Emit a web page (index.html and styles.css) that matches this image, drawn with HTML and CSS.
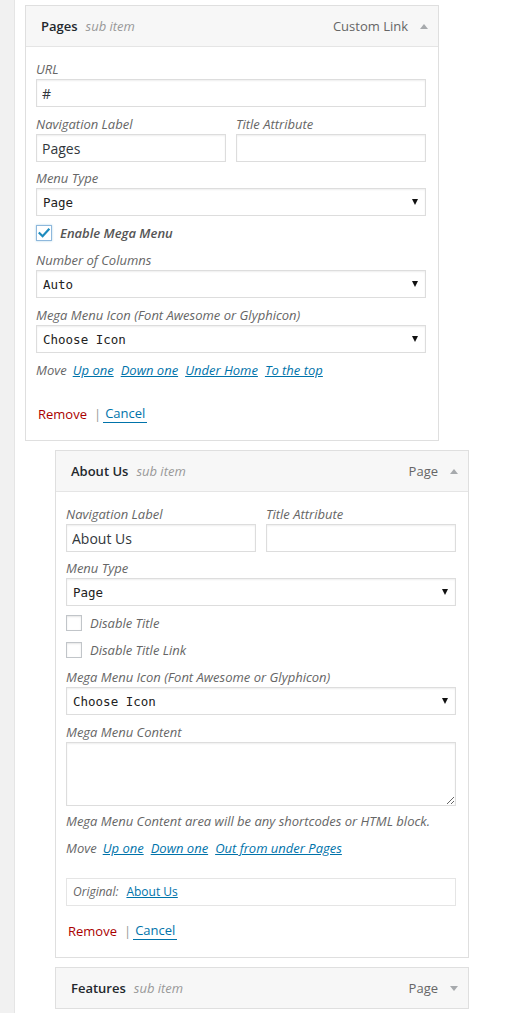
FILE: index.html
```html
<!DOCTYPE html>
<html lang="en">
<head>
<meta charset="utf-8">
<title>Menu items</title>
<link rel="stylesheet" href="styles.css">
</head>
<body>
<div class="screen">
  <div class="rail"></div>
  <ul class="menu-list">
    <!-- Pages -->
    <li class="menu-item">
      <div class="item-bar open">
        <span class="item-title">Pages</span>
        <span class="is-submenu">sub item</span>
        <span class="item-controls">
          <span class="item-type">Custom Link</span>
          <span class="item-arrow up"></span>
        </span>
      </div>
      <div class="item-settings">
        <div class="field field-wide">
          <label class="field-label">URL</label>
          <input class="text-input" type="text" value="#">
        </div>
        <div class="field-row">
          <div class="field half">
            <label class="field-label">Navigation Label</label>
            <input class="text-input" type="text" value="Pages">
          </div>
          <div class="field half">
            <label class="field-label">Title Attribute</label>
            <input class="text-input" type="text" value="">
          </div>
        </div>
        <div class="field">
          <label class="field-label">Menu Type</label>
          <span class="select-wrap"><select class="select"><option>Page</option></select></span>
        </div>
        <div class="check-row">
          <span class="checkbox checked">
            <svg width="14" height="14" viewBox="0 0 14 14"><path d="M2.6 7.2 L5.6 10.2 L11.6 3.6" fill="none" stroke="#1e8cbe" stroke-width="2.2" stroke-linecap="square"/></svg>
          </span>
          <span class="check-label strong">Enable Mega Menu</span>
        </div>
        <div class="field">
          <label class="field-label">Number of Columns</label>
          <span class="select-wrap"><select class="select"><option>Auto</option></select></span>
        </div>
        <div class="field">
          <label class="field-label">Mega Menu Icon (Font Awesome or Glyphicon)</label>
          <span class="select-wrap"><select class="select"><option>Choose Icon</option></select></span>
        </div>
        <div class="move-row">
          <span>Move</span>
          <a class="move-link first" href="#">Up one</a>
          <a class="move-link" href="#">Down one</a>
          <a class="move-link" href="#">Under Home</a>
          <a class="move-link" href="#">To the top</a>
        </div>
        <div class="actions actions-gap">
          <a class="remove" href="#">Remove</a>
          <span class="sep">|</span>
          <a class="cancel" href="#">Cancel</a>
        </div>
      </div>
    </li>

    <!-- About Us -->
    <li class="menu-item depth-1">
      <div class="item-bar open">
        <span class="item-title">About Us</span>
        <span class="is-submenu">sub item</span>
        <span class="item-controls">
          <span class="item-type">Page</span>
          <span class="item-arrow up"></span>
        </span>
      </div>
      <div class="item-settings">
        <div class="field-row">
          <div class="field half">
            <label class="field-label">Navigation Label</label>
            <input class="text-input" type="text" value="About Us">
          </div>
          <div class="field half">
            <label class="field-label">Title Attribute</label>
            <input class="text-input" type="text" value="">
          </div>
        </div>
        <div class="field">
          <label class="field-label">Menu Type</label>
          <span class="select-wrap"><select class="select"><option>Page</option></select></span>
        </div>
        <div class="check-row">
          <span class="checkbox"></span>
          <span class="check-label">Disable Title</span>
        </div>
        <div class="check-row">
          <span class="checkbox"></span>
          <span class="check-label">Disable Title Link</span>
        </div>
        <div class="field">
          <label class="field-label">Mega Menu Icon (Font Awesome or Glyphicon)</label>
          <span class="select-wrap"><select class="select"><option>Choose Icon</option></select></span>
        </div>
        <div class="field field-area">
          <label class="field-label">Mega Menu Content</label>
          <textarea class="text-area"></textarea>
        </div>
        <p class="description">Mega Menu Content area will be any shortcodes or HTML block.</p>
        <div class="move-row">
          <span>Move</span>
          <a class="move-link first" href="#">Up one</a>
          <a class="move-link" href="#">Down one</a>
          <a class="move-link" href="#">Out from under Pages</a>
        </div>
        <div class="original">
          <span class="original-label">Original:</span>
          <a class="original-link" href="#">About Us</a>
        </div>
        <div class="actions">
          <a class="remove" href="#">Remove</a>
          <span class="sep">|</span>
          <a class="cancel" href="#">Cancel</a>
        </div>
      </div>
    </li>

    <!-- Features (collapsed) -->
    <li class="menu-item depth-1">
      <div class="item-bar">
        <span class="item-title">Features</span>
        <span class="is-submenu">sub item</span>
        <span class="item-controls">
          <span class="item-type">Page</span>
          <span class="item-arrow down"></span>
        </span>
      </div>
    </li>
  </ul>
</div>
</body>
</html>
```

FILE: styles.css
```css
html, body {
  margin: 0;
  padding: 0;
  background: #fff;
}

body {
  font-family: "Open Sans", "Noto Sans", sans-serif;
  font-size: 13px;
  line-height: 18px;
  color: #444;
}

.screen {
  display: flex;
  min-height: 1013px;
}

/* admin sidebar edge */
.rail {
  flex: none;
  width: 14px;
  background: #f1f1f1;
  border-right: 1px solid #e5e5e5;
}

.menu-list {
  list-style: none;
  margin: 0;
  padding: 5px 0 0 10px;
  display: flex;
  flex-direction: column;
  gap: 9px;
}

.menu-item {
  width: 414px;
  box-sizing: border-box;
  border: 1px solid #dfdfdf;
  background: #fff;
}

.menu-item.depth-1 {
  margin-left: 30px;
}

/* handle bar */
.item-bar {
  height: 40px;
  display: flex;
  align-items: center;
  padding: 0 10px 0 15px;
  background: #f7f7f7;
}

.item-bar.open {
  border-bottom: 1px solid #e5e5e5;
}

.item-title {
  font-weight: 600;
  color: #23282d;
}

.is-submenu {
  margin-left: 8px;
  font-style: italic;
  color: #999;
}

.item-controls {
  margin-left: auto;
  display: flex;
  align-items: center;
}

.item-type {
  color: #666;
}

.item-arrow {
  width: 0;
  height: 0;
  margin-left: 12px;
  border-left: 4px solid transparent;
  border-right: 4px solid transparent;
}

.item-arrow.up {
  border-bottom: 5px solid #a7aaad;
}

.item-arrow.down {
  border-top: 5px solid #a7aaad;
}

/* settings panel */
.item-settings {
  padding: 13px 10px 17px 10px;
}

.field {
  margin: 0 0 8px;
  width: 390px;
}

.field-row {
  display: flex;
  gap: 10px;
  width: 390px;
  margin-bottom: 7px;
}

.field-row .field {
  margin: 0;
}

.field.half {
  width: 190px;
}

.field-label {
  display: block;
  font-style: italic;
  color: #666;
  line-height: 18px;
  margin-bottom: 1px;
  white-space: nowrap;
}

.text-input {
  display: block;
  box-sizing: border-box;
  width: 100%;
  height: 28px;
  margin: 0;
  padding: 0 5px;
  border: 1px solid #ddd;
  border-radius: 0;
  box-shadow: inset 0 1px 2px rgba(0, 0, 0, 0.07);
  background: #fff;
  font-family: "Open Sans", "Noto Sans", sans-serif;
  font-size: 14px;
  color: #32373c;
  outline: none;
}

.select-wrap {
  position: relative;
  display: block;
  width: 390px;
  height: 28px;
}

.select {
  display: block;
  box-sizing: border-box;
  width: 100%;
  height: 28px;
  margin: 0;
  padding: 0 6px;
  border: 1px solid #ddd;
  border-radius: 0;
  box-shadow: inset 0 1px 2px rgba(0, 0, 0, 0.07);
  background: #fff;
  -webkit-appearance: none;
  appearance: none;
  font-family: "DejaVu Sans Mono", "Liberation Mono", monospace;
  font-size: 12.5px;
  color: #222;
  outline: none;
}

/* dropdown caret */
.select-wrap::after {
  content: "";
  position: absolute;
  right: 8px;
  top: 11px;
  width: 0;
  height: 0;
  border-left: 3px solid transparent;
  border-right: 3px solid transparent;
  border-top: 6px solid #111;
}

.check-row {
  display: flex;
  align-items: center;
  height: 18px;
  margin: 0 0 9px;
}

.checkbox {
  box-sizing: border-box;
  width: 16px;
  height: 16px;
  flex: none;
  border: 1px solid #c1c5c9;
  background: #fff;
  box-shadow: inset 0 1px 2px rgba(0, 0, 0, 0.1);
  display: flex;
  align-items: center;
  justify-content: center;
}

.checkbox.checked {
  border-color: #8fb8dc;
  box-shadow: 0 0 2px rgba(30, 140, 190, 0.35);
}

.check-label {
  margin-left: 8px;
  font-style: italic;
  color: #666;
}

.check-label.strong {
  font-weight: 600;
  color: #555;
}

.field-area {
  margin-bottom: 6px;
}

.text-area {
  display: block;
  box-sizing: border-box;
  width: 390px;
  height: 64px;
  margin: 0;
  padding: 4px 6px;
  border: 1px solid #ddd;
  border-radius: 0;
  box-shadow: inset 0 1px 2px rgba(0, 0, 0, 0.07);
  background: #fff;
  resize: vertical;
  font-family: "Open Sans", "Noto Sans", sans-serif;
  font-size: 14px;
  outline: none;
}

.description {
  margin: 0 0 9px;
  font-style: italic;
  color: #666;
  white-space: nowrap;
}

.move-row {
  display: flex;
  height: 18px;
  font-style: italic;
  color: #666;
  white-space: nowrap;
}

.move-link {
  margin-left: 7px;
  color: #0073aa;
  text-decoration: underline;
}

.move-link.first {
  margin-left: 6px;
}

.actions {
  display: flex;
  align-items: flex-start;
  height: 18px;
  margin-top: 16px;
  padding-left: 2px;
}

.actions-gap {
  margin-top: 26px;
}

.remove {
  color: #a00;
  text-decoration: none;
}

.sep {
  margin: 0 2px 0 7px;
  color: #999;
}

.cancel {
  display: inline-block;
  line-height: 17px;
  padding: 0 2px;
  color: #0073aa;
  text-decoration: none;
  border-bottom: 1px solid #0073aa;
}

.original {
  box-sizing: border-box;
  width: 390px;
  height: 28px;
  margin-top: 21px;
  padding: 0 6px;
  border: 1px solid #e5e5e5;
  display: flex;
  align-items: center;
  font-size: 12px;
}

.original-label {
  font-style: italic;
  color: #666;
}

.original-link {
  margin-left: 8px;
  color: #0073aa;
  text-decoration: underline;
}
```
